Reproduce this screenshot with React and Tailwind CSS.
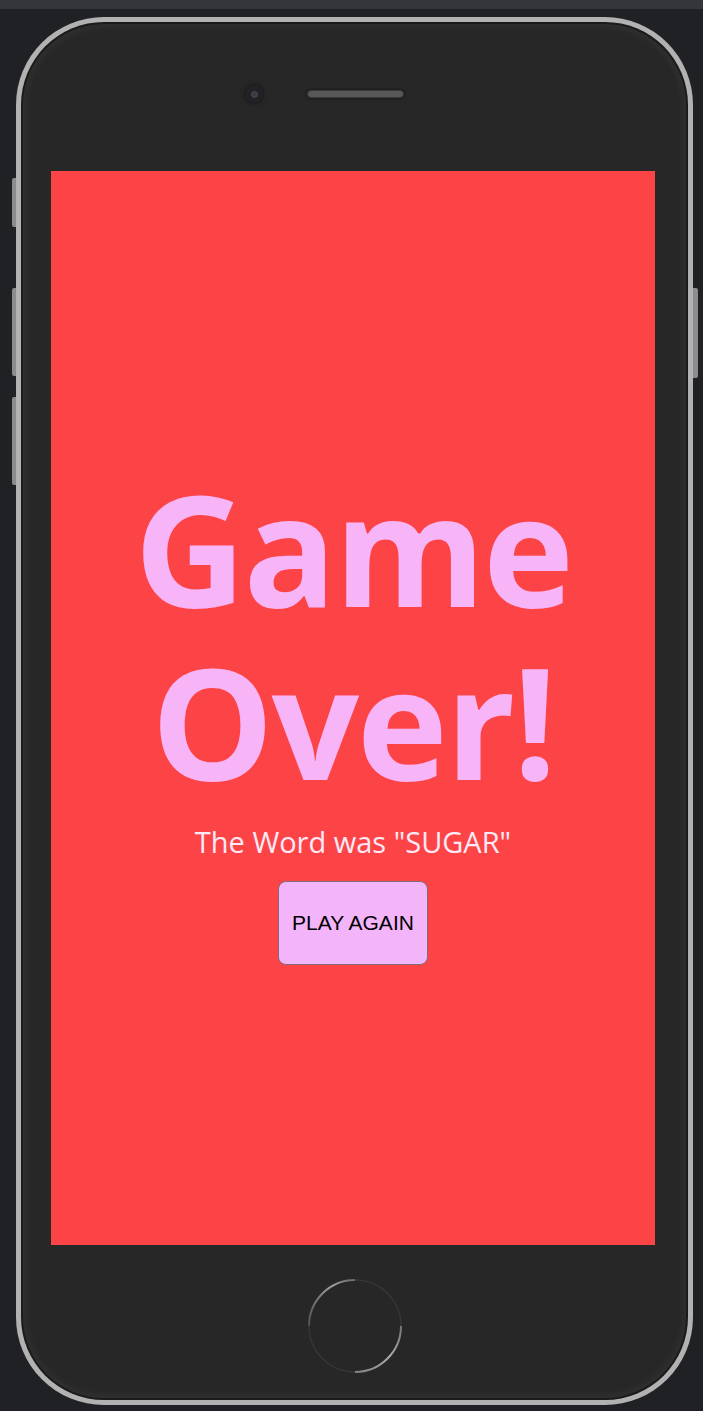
import React from 'react';

const HomeButton = () => (
  <svg width="100" height="100" viewBox="0 0 100 100">
    <defs>
      <linearGradient id="arcA" x1="50" y1="4" x2="4" y2="50" gradientUnits="userSpaceOnUse">
        <stop offset="0" stopColor="#9a9a9a" stopOpacity="0.5" />
        <stop offset="0.3" stopColor="#a0a0a0" stopOpacity="1" />
        <stop offset="1" stopColor="#888888" stopOpacity="0.35" />
      </linearGradient>
      <linearGradient id="arcB" x1="96" y1="50" x2="50" y2="96" gradientUnits="userSpaceOnUse">
        <stop offset="0" stopColor="#a0a0a0" stopOpacity="0.6" />
        <stop offset="0.45" stopColor="#aaaaaa" stopOpacity="1" />
        <stop offset="1" stopColor="#8a8a8a" stopOpacity="0.9" />
      </linearGradient>
    </defs>
    <circle cx="50" cy="50" r="46" fill="none" stroke="#363636" strokeWidth="1.5" />
    <path d="M50 4 A46 46 0 0 0 4 50" fill="none" stroke="url(#arcA)" strokeWidth="2" />
    <path d="M96 50 A46 46 0 0 1 50 96" fill="none" stroke="url(#arcB)" strokeWidth="2" />
  </svg>
);

const GameOver = ({ word }) => (
  <div className="flex flex-col items-center pt-[290px]">
    <h1 className="font-['Open_Sans','Noto_Sans',sans-serif] font-bold text-[154px] leading-[173px] tracking-[-0.015em] text-[#f7b4f7] text-center">
      <span className="block">Game</span>
      <span className="block">Over!</span>
    </h1>
    <p className="mt-[17px] font-['Open_Sans','Noto_Sans',sans-serif] text-[29px] leading-[36px] text-[#fde9f7]">
      The Word was "{word}"
    </p>
    <button className="mt-[21px] w-[150px] h-[84px] rounded-[8px] border border-[#7a6f7a] bg-[#f4b4f9] font-['Liberation_Sans',Arial,sans-serif] text-[21px] text-black">
      PLAY AGAIN
    </button>
  </div>
);

export default function App() {
  return (
    <div className="min-h-screen bg-[#202124]">
      <div className="h-[9px] bg-[#35363b]" />
      <div className="relative ml-[16px] mt-[8px] w-[677px] h-[1388px] rounded-[88px] bg-[#b2b2b2] p-[5px]">
        {/* side keys */}
        <div className="absolute left-[-4px] top-[161px] w-[4px] h-[49px] rounded-l-[2px] bg-[#8c8c8c]" />
        <div className="absolute left-[-4px] top-[271px] w-[4px] h-[88px] rounded-l-[2px] bg-[#8c8c8c]" />
        <div className="absolute left-[-4px] top-[380px] w-[4px] h-[88px] rounded-l-[2px] bg-[#8c8c8c]" />
        <div className="absolute right-[-5px] top-[271px] w-[5px] h-[90px] rounded-r-[2px] bg-[#8c8c8c]" />

        <div className="h-full rounded-[83px] bg-[#1b1b1b] p-[2px]">
          <div className="h-full rounded-[81px] bg-[#272727] shadow-[inset_0_0_12px_rgba(255,255,255,0.08)] flex flex-col">
            <div className="h-[147px] flex items-start pt-[61px] pl-[222px]">
              <div className="w-[18px] h-[18px] rounded-full bg-[#222226] shadow-[0_0_4px_rgba(0,0,0,0.6)] flex items-center justify-center">
                <div className="w-[7px] h-[7px] rounded-full bg-[#3b3b46] border border-[#4a4a55]" />
              </div>
              <div className="ml-[44px] mt-[5px] w-[97px] h-[8px] rounded-full bg-[#585858] border border-[#3a3a3a] shadow-[0_0_3px_rgba(0,0,0,0.6)]" />
            </div>

            <div className="ml-[28px] w-[604px] h-[1074px] bg-[#fc4446]">
              <GameOver word="SUGAR" />
            </div>

            <div className="flex justify-center pt-[31px]">
              <HomeButton />
            </div>
          </div>
        </div>
      </div>
    </div>
  );
}
